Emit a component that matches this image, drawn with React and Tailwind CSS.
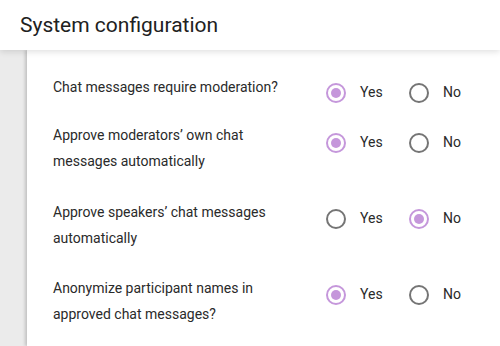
import React from "react";

function Radio({ checked }) {
  return checked ? (
    <span className="w-[20px] h-[20px] rounded-full border-2 border-[#c597db] flex items-center justify-center shrink-0">
      <span className="w-[10px] h-[10px] rounded-full bg-[#c597db]" />
    </span>
  ) : (
    <span className="w-[20px] h-[20px] rounded-full border-2 border-[#757575] shrink-0" />
  );
}

function Row({ label, yes, mt, rmt }) {
  return (
    <div className="flex items-start" style={{ marginTop: mt }}>
      <div className="w-[273px] pr-[33px] text-[14px] leading-[25.5px] text-[#2a2a2a]">{label}</div>
      <div className="flex items-center" style={{ marginTop: rmt }}>
        <Radio checked={yes} />
        <span className="ml-[14px] w-[49px] text-[14px] text-[#2a2a2a]">Yes</span>
        <Radio checked={!yes} />
        <span className="ml-[14px] text-[14px] text-[#2a2a2a]">No</span>
      </div>
    </div>
  );
}

export default function App() {
  return (
    <div className="w-[500px] h-[346px] flex flex-col bg-[#ebebeb] overflow-hidden" style={{ fontFamily: "Roboto, 'Noto Sans', sans-serif" }}>
      <div className="h-[50px] shrink-0 bg-white flex items-center pl-[20px] relative z-10 shadow-[0_2px_6px_rgba(0,0,0,0.12)]">
        <span className="text-[21px] text-[#212121] mt-[1px]">System configuration</span>
      </div>
      <div className="flex-1 flex">
        <div className="w-[27px] shrink-0 bg-[#ebebeb]" />
        <div className="flex-1 bg-white pl-[26px] pt-[25px] shadow-[-2px_0_3px_rgba(0,0,0,0.18)]">
          <Row label="Chat messages require moderation?" yes={true} mt={0} rmt={7} />
          <Row label="Approve moderators’ own chat messages automatically" yes={true} mt={20} rmt={9} />
          <Row label="Approve speakers’ chat messages automatically" yes={false} mt={26} rmt={8} />
          <Row label="Anonymize participant names in approved chat messages?" yes={true} mt={25} rmt={8} />
        </div>
      </div>
    </div>
  );
}
